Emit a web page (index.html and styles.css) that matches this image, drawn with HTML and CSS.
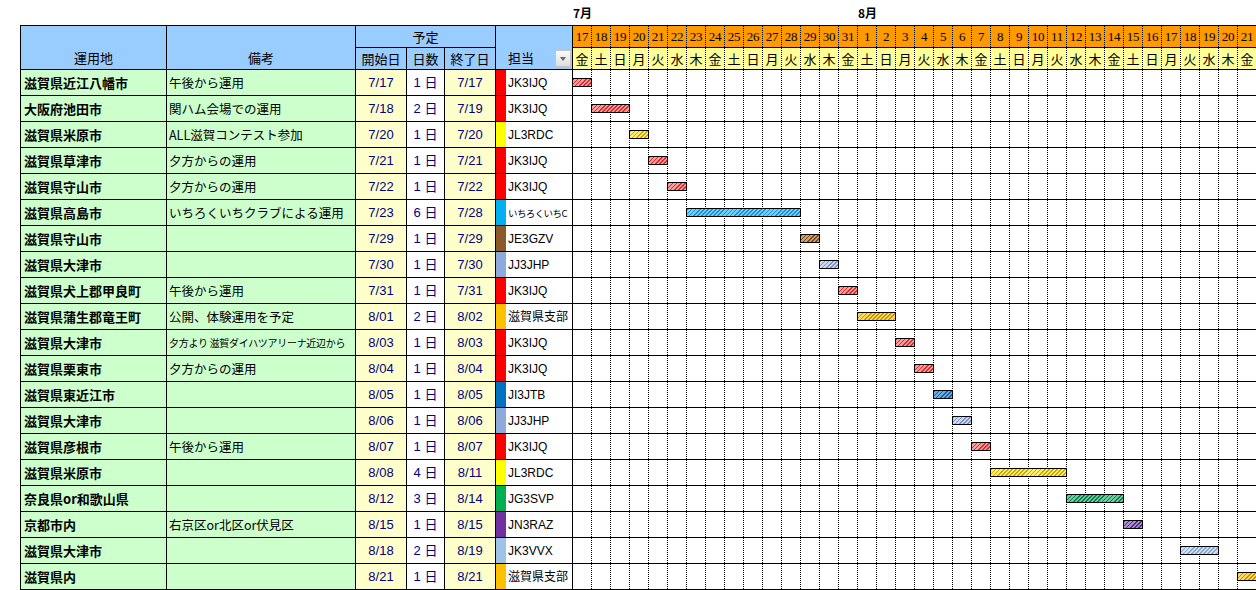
FILE: index.html
```html
<!DOCTYPE html>
<html lang="ja">
<head>
<meta charset="utf-8">
<title>運用予定</title>
<link rel="stylesheet" href="styles.css">
</head>
<body>
<div class="sheet">
  <div class="months"><span class="month-jul">7月</span><span>8月</span></div>
  <div class="grid">
    <div class="hd hd-loc">運用地</div>
    <div class="hd hd-note">備考</div>
    <div class="hd hd-plan">予定</div>
    <div class="hd hd-who"><span class="who-label">担当</span><span class="filter"></span></div>
    <div class="days">
      <span>17</span><span>18</span><span>19</span><span>20</span><span>21</span><span>22</span><span>23</span><span>24</span><span>25</span><span>26</span><span>27</span><span>28</span><span>29</span><span>30</span><span>31</span><span>1</span><span>2</span><span>3</span><span>4</span><span>5</span><span>6</span><span>7</span><span>8</span><span>9</span><span>10</span><span>11</span><span>12</span><span>13</span><span>14</span><span>15</span><span>16</span><span>17</span><span>18</span><span>19</span><span>20</span><span>21</span>
    </div>
    <div class="hd hd-sub">開始日</div>
    <div class="hd hd-sub">日数</div>
    <div class="hd hd-sub">終了日</div>
    <div class="wdays">
      <span>金</span><span>土</span><span>日</span><span>月</span><span>火</span><span>水</span><span>木</span><span>金</span><span>土</span><span>日</span><span>月</span><span>火</span><span>水</span><span>木</span><span>金</span><span>土</span><span>日</span><span>月</span><span>火</span><span>水</span><span>木</span><span>金</span><span>土</span><span>日</span><span>月</span><span>火</span><span>水</span><span>木</span><span>金</span><span>土</span><span>日</span><span>月</span><span>火</span><span>水</span><span>木</span><span>金</span>
    </div>

    <div class="loc">滋賀県近江八幡市</div><div class="note">午後から運用</div><div class="date">7/17</div><div class="num">1 日</div><div class="date">7/17</div><div class="strip s-red"></div><div class="who">JK3IJQ</div>
    <div class="gantt"><span class="bar b-red" style="grid-column:1 / span 1"></span></div>

    <div class="loc">大阪府池田市</div><div class="note">関ハム会場での運用</div><div class="date">7/18</div><div class="num">2 日</div><div class="date">7/19</div><div class="strip s-red"></div><div class="who">JK3IJQ</div>
    <div class="gantt"><span class="bar b-red" style="grid-column:2 / span 2"></span></div>

    <div class="loc">滋賀県米原市</div><div class="note">ALL滋賀コンテスト参加</div><div class="date">7/20</div><div class="num">1 日</div><div class="date">7/20</div><div class="strip s-yel"></div><div class="who">JL3RDC</div>
    <div class="gantt"><span class="bar b-yel" style="grid-column:4 / span 1"></span></div>

    <div class="loc">滋賀県草津市</div><div class="note">夕方からの運用</div><div class="date">7/21</div><div class="num">1 日</div><div class="date">7/21</div><div class="strip s-red"></div><div class="who">JK3IJQ</div>
    <div class="gantt"><span class="bar b-red" style="grid-column:5 / span 1"></span></div>

    <div class="loc">滋賀県守山市</div><div class="note">夕方からの運用</div><div class="date">7/22</div><div class="num">1 日</div><div class="date">7/22</div><div class="strip s-red"></div><div class="who">JK3IJQ</div>
    <div class="gantt"><span class="bar b-red" style="grid-column:6 / span 1"></span></div>

    <div class="loc">滋賀県高島市</div><div class="note">いちろくいちクラブによる運用</div><div class="date">7/23</div><div class="num">6 日</div><div class="date">7/28</div><div class="strip s-cyan"></div><div class="who who-small">いちろくいちC</div>
    <div class="gantt"><span class="bar b-cyan" style="grid-column:7 / span 6"></span></div>

    <div class="loc">滋賀県守山市</div><div class="note"></div><div class="date">7/29</div><div class="num">1 日</div><div class="date">7/29</div><div class="strip s-brown"></div><div class="who">JE3GZV</div>
    <div class="gantt"><span class="bar b-brown" style="grid-column:13 / span 1"></span></div>

    <div class="loc">滋賀県大津市</div><div class="note"></div><div class="date">7/30</div><div class="num">1 日</div><div class="date">7/30</div><div class="strip s-lb"></div><div class="who">JJ3JHP</div>
    <div class="gantt"><span class="bar b-lb" style="grid-column:14 / span 1"></span></div>

    <div class="loc">滋賀県犬上郡甲良町</div><div class="note">午後から運用</div><div class="date">7/31</div><div class="num">1 日</div><div class="date">7/31</div><div class="strip s-red"></div><div class="who">JK3IJQ</div>
    <div class="gantt"><span class="bar b-red" style="grid-column:15 / span 1"></span></div>

    <div class="loc">滋賀県蒲生郡竜王町</div><div class="note">公開、体験運用を予定</div><div class="date">8/01</div><div class="num">2 日</div><div class="date">8/02</div><div class="strip s-org"></div><div class="who">滋賀県支部</div>
    <div class="gantt"><span class="bar b-org" style="grid-column:16 / span 2"></span></div>

    <div class="loc">滋賀県大津市</div><div class="note note-small">夕方より 滋賀ダイハツアリーナ近辺から</div><div class="date">8/03</div><div class="num">1 日</div><div class="date">8/03</div><div class="strip s-red"></div><div class="who">JK3IJQ</div>
    <div class="gantt"><span class="bar b-red" style="grid-column:18 / span 1"></span></div>

    <div class="loc">滋賀県栗東市</div><div class="note">夕方からの運用</div><div class="date">8/04</div><div class="num">1 日</div><div class="date">8/04</div><div class="strip s-red"></div><div class="who">JK3IJQ</div>
    <div class="gantt"><span class="bar b-red" style="grid-column:19 / span 1"></span></div>

    <div class="loc">滋賀県東近江市</div><div class="note"></div><div class="date">8/05</div><div class="num">1 日</div><div class="date">8/05</div><div class="strip s-blue"></div><div class="who">JI3JTB</div>
    <div class="gantt"><span class="bar b-blue" style="grid-column:20 / span 1"></span></div>

    <div class="loc">滋賀県大津市</div><div class="note"></div><div class="date">8/06</div><div class="num">1 日</div><div class="date">8/06</div><div class="strip s-lb"></div><div class="who">JJ3JHP</div>
    <div class="gantt"><span class="bar b-lb" style="grid-column:21 / span 1"></span></div>

    <div class="loc">滋賀県彦根市</div><div class="note">午後から運用</div><div class="date">8/07</div><div class="num">1 日</div><div class="date">8/07</div><div class="strip s-red"></div><div class="who">JK3IJQ</div>
    <div class="gantt"><span class="bar b-red" style="grid-column:22 / span 1"></span></div>

    <div class="loc">滋賀県米原市</div><div class="note"></div><div class="date">8/08</div><div class="num">4 日</div><div class="date">8/11</div><div class="strip s-yel"></div><div class="who">JL3RDC</div>
    <div class="gantt"><span class="bar b-yel" style="grid-column:23 / span 4"></span></div>

    <div class="loc">奈良県or和歌山県</div><div class="note"></div><div class="date">8/12</div><div class="num">3 日</div><div class="date">8/14</div><div class="strip s-grn"></div><div class="who">JG3SVP</div>
    <div class="gantt"><span class="bar b-grn" style="grid-column:27 / span 3"></span></div>

    <div class="loc">京都市内</div><div class="note">右京区or北区or伏見区</div><div class="date">8/15</div><div class="num">1 日</div><div class="date">8/15</div><div class="strip s-pur"></div><div class="who">JN3RAZ</div>
    <div class="gantt"><span class="bar b-pur" style="grid-column:30 / span 1"></span></div>

    <div class="loc">滋賀県大津市</div><div class="note"></div><div class="date">8/18</div><div class="num">2 日</div><div class="date">8/19</div><div class="strip s-lb2"></div><div class="who">JK3VVX</div>
    <div class="gantt"><span class="bar b-lb2" style="grid-column:33 / span 2"></span></div>

    <div class="loc">滋賀県内</div><div class="note"></div><div class="date">8/21</div><div class="num">1 日</div><div class="date">8/21</div><div class="strip s-org"></div><div class="who">滋賀県支部</div>
    <div class="gantt"><span class="bar b-org" style="grid-column:36 / span 1"></span></div>
  </div>
</div>
</body>
</html>
```

FILE: styles.css
```css
* { box-sizing: border-box; }
html, body { margin: 0; padding: 0; background: #fff; }
body {
  width: 1256px;
  height: 590px;
  overflow: hidden;
  font-family: "Liberation Sans", "Noto Sans CJK JP", sans-serif;
  font-size: 13px;
  color: #000;
}
.sheet { padding-left: 20px; width: 1280px; }

.months {
  height: 25px;
  display: flex;
  align-items: center;
  padding-left: 553px;
  padding-bottom: 1px;
  font-weight: bold;
  font-size: 12px;
  font-family: "Noto Sans CJK JP", sans-serif;
}
.month-jul { width: 285px; }

.grid {
  display: grid;
  grid-template-columns: 146px 189px 51px 38px 51px 10px 67px 684px;
  grid-template-rows: 22px 22px repeat(20, 26px);
  border-left: 1px solid #000;
  border-top: 1px solid #000;
  width: 1237px;
}
.grid > div {
  border-right: 1px solid #000;
  border-bottom: 1px solid #000;
  display: flex;
  align-items: center;
  white-space: nowrap;
  overflow: hidden;
  line-height: 16px;
}

/* header */
.hd { background: #99ccff; justify-content: center; font-family: "Noto Sans CJK JP", sans-serif; }
.hd-loc { grid-column: 1; grid-row: 1 / 3; align-items: flex-end !important; padding-bottom: 3px; }
.hd-note { grid-column: 2; grid-row: 1 / 3; align-items: flex-end !important; padding-bottom: 3px; }
.hd-plan { grid-column: 3 / 6; grid-row: 1; }
.hd-who {
  grid-column: 6 / 8;
  grid-row: 1 / 3;
  align-items: flex-end !important;
  justify-content: flex-start !important;
  padding-left: 12px;
}
.who-label { padding-bottom: 3px; }
.filter {
  margin-left: auto;
  margin-right: 1px;
  margin-bottom: 2px;
  width: 16px;
  height: 17px;
  border: 1px solid #c4c4c4;
  background: linear-gradient(#fbfbfb, #dedede);
  display: flex;
  align-items: center;
  justify-content: center;
}
.filter::after {
  content: "";
  width: 0;
  height: 0;
  border-left: 3.5px solid transparent;
  border-right: 3.5px solid transparent;
  border-top: 4px solid #666;
}

.days, .wdays {
  grid-column: 8;
  border-right: none !important;
  align-items: stretch !important;
}
.days { grid-row: 1; background: #ff9900; }
.wdays { grid-row: 2; background: #ffff99; }
.days span, .wdays span {
  flex: none;
  width: 19px;
  border-right: 1px dotted #000;
  display: flex;
  align-items: center;
  justify-content: center;
}
.days span {
  font-family: "Liberation Serif", serif;
  font-size: 13px;
  letter-spacing: -0.3px;
}
.wdays span {
  font-family: "Noto Sans CJK JP", sans-serif;
  font-size: 13px;
}

/* body cells */
.loc {
  background: #ccffcc;
  font-weight: bold;
  padding-left: 3px;
  font-family: "Noto Sans CJK JP", sans-serif;
  font-size: 13px;
}
.note {
  background: #ccffcc;
  padding-left: 2px;
  padding-top: 1px;
  font-family: "Noto Sans CJK JP", sans-serif;
  font-size: 12.5px;
}
.note-small { font-size: 10px; letter-spacing: -0.3px; }
.date {
  background: #ffffcc;
  color: #000080;
  justify-content: center;
  font-size: 13px;
}
.num {
  background: #fff;
  color: #000080;
  justify-content: center;
  font-size: 13px;
}
.strip { border-right: none !important; }
.who {
  background: #fff;
  padding-left: 2px;
  font-size: 12px;
}
.who-small { font-size: 9.5px; letter-spacing: -0.6px; font-family: "Noto Sans CJK JP", sans-serif; }

.s-red { background: #ff0000; }
.s-yel { background: #ffff00; }
.s-cyan { background: #00b0f0; }
.s-brown { background: #8b5a2b; }
.s-lb { background: #8eaadb; }
.s-lb2 { background: #9dc3e6; }
.s-org { background: #ffc000; }
.s-blue { background: #0070c0; }
.s-grn { background: #00b050; }
.s-pur { background: #7030a0; }

/* gantt body */
.grid > .gantt {
  display: grid;
  grid-template-columns: repeat(36, 19px);
  grid-template-rows: 100%;
  align-items: center;
  border-right: none;
  background-color: #fff;
  background-image:
    linear-gradient(to bottom, transparent 1px, #fff 1px),
    linear-gradient(to right, transparent 18px, #000 18px);
  background-size: 19px 2px;
  overflow: visible;
}
.bar {
  grid-row: 1;
  height: 9px;
  margin-left: -1px;
  border: 1px solid #000;
}
.b-red { background: repeating-linear-gradient(135deg, #e02828 0 1.2px, #ff9c9c 1.2px 2.9px); }
.b-yel { background: repeating-linear-gradient(135deg, #c9a800 0 1.2px, #ffee70 1.2px 2.9px); }
.b-cyan { background: repeating-linear-gradient(135deg, #1f8fd0 0 1.2px, #6fd0ff 1.2px 2.9px); }
.b-brown { background: repeating-linear-gradient(135deg, #7a4a1e 0 1.2px, #cf9e6e 1.2px 2.9px); }
.b-lb { background: repeating-linear-gradient(135deg, #7b90c4 0 1.2px, #ccd8f2 1.2px 2.9px); }
.b-lb2 { background: repeating-linear-gradient(135deg, #86a6cc 0 1.2px, #cfe0f2 1.2px 2.9px); }
.b-org { background: repeating-linear-gradient(135deg, #c99400 0 1.2px, #ffd860 1.2px 2.9px); }
.b-blue { background: repeating-linear-gradient(135deg, #1a5c9e 0 1.2px, #6aaee6 1.2px 2.9px); }
.b-grn { background: repeating-linear-gradient(135deg, #0a8048 0 1.2px, #6acc9c 1.2px 2.9px); }
.b-pur { background: repeating-linear-gradient(135deg, #55287f 0 1.2px, #ab8ccf 1.2px 2.9px); }
```
